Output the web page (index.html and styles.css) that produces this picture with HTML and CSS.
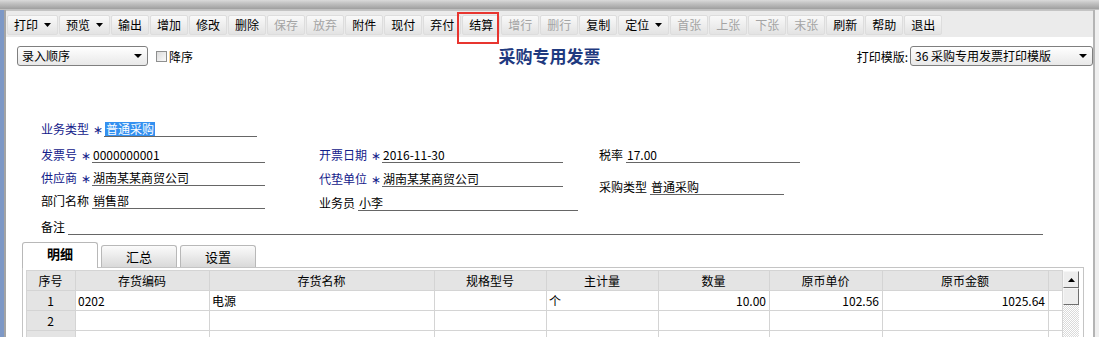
FILE: index.html
```html
<!DOCTYPE html>
<html lang="zh-CN">

<head>
    <meta charset="UTF-8">
    <title>采购专用发票</title>
    <link rel="stylesheet" href="styles.css">
</head>

<body>
    <div class="topbar"></div>
    <div class="window">
        <div class="sidebar"></div>
        <div class="main">
            <!-- 工具栏 -->
            <div class="toolbar">
                <span class="btn">打印<svg class="arrow" width="7" height="4" viewBox="0 0 7 4"><path d="M0 0h7L3.5 4z"/></svg></span>
                <span class="btn">预览<svg class="arrow" width="7" height="4" viewBox="0 0 7 4"><path d="M0 0h7L3.5 4z"/></svg></span>
                <span class="btn">输出</span>
                <span class="btn">增加</span>
                <span class="btn">修改</span>
                <span class="btn">删除</span>
                <span class="btn off">保存</span>
                <span class="btn off">放弃</span>
                <span class="btn">附件</span>
                <span class="btn">现付</span>
                <span class="btn">弃付</span>
                <span class="btn">结算<span class="mark"></span></span>
                <span class="btn off">增行</span>
                <span class="btn off">删行</span>
                <span class="btn">复制</span>
                <span class="btn">定位<svg class="arrow" width="7" height="4" viewBox="0 0 7 4"><path d="M0 0h7L3.5 4z"/></svg></span>
                <span class="btn off">首张</span>
                <span class="btn off">上张</span>
                <span class="btn off">下张</span>
                <span class="btn off">末张</span>
                <span class="btn">刷新</span>
                <span class="btn">帮助</span>
                <span class="btn">退出</span>
            </div>

            <!-- 标题行 -->
            <div class="headrow">
                <div class="head-left">
                    <div class="select sel-order">录入顺序<svg width="8" height="4" viewBox="0 0 8 4"><path d="M0 0h8L4 4z"/></svg></div>
                    <span class="check"></span>降序
                </div>
                <div class="title">采购专用发票</div>
                <div class="head-right">
                    打印模版:<div class="select sel-tpl">36 采购专用发票打印模版<svg width="8" height="4" viewBox="0 0 8 4"><path d="M0 0h8L4 4z"/></svg></div>
                </div>
            </div>

            <!-- 表头字段 -->
            <div class="form">
                <div class="field">
                    <span class="lbl req">业务类型</span><span class="star">∗</span><span class="val v-type"><span class="hl">普通采购</span></span>
                </div>
                <div class="cols">
                    <div class="col col1">
                        <div class="field">
                            <span class="lbl req">发票号</span><span class="star">∗</span><span class="val v-short">0000000001</span>
                        </div>
                        <div class="field">
                            <span class="lbl req">供应商</span><span class="star">∗</span><span class="val v-short">湖南某某商贸公司</span>
                        </div>
                        <div class="field">
                            <span class="lbl">部门名称</span><span class="val v-short">销售部</span>
                        </div>
                    </div>
                    <div class="col col2">
                        <div class="field">
                            <span class="lbl req">开票日期</span><span class="star">∗</span><span class="val v-mid">2016-11-30</span>
                        </div>
                        <div class="field">
                            <span class="lbl req">代垫单位</span><span class="star">∗</span><span class="val v-mid">湖南某某商贸公司</span>
                        </div>
                        <div class="field">
                            <span class="lbl">业务员</span><span class="val v-clerk">小李</span>
                        </div>
                    </div>
                    <div class="col col3">
                        <div class="field">
                            <span class="lbl">税率</span><span class="val v-tax">17.00</span>
                        </div>
                        <div class="field">
                            <span class="lbl">采购类型</span><span class="val v-ptype">普通采购</span>
                        </div>
                    </div>
                </div>
                <div class="field note">
                    <span class="lbl">备注</span><span class="val v-note"></span>
                </div>
            </div>

            <!-- 页签 -->
            <div class="tabs">
                <span class="tab active">明细</span>
                <span class="tab">汇总</span>
                <span class="tab">设置</span>
            </div>
            <div class="panel">
                <table class="grid">
                    <colgroup>
                        <col class="c-no">
                        <col class="c-code">
                        <col class="c-name">
                        <col class="c-spec">
                        <col class="c-unit">
                        <col class="c-qty">
                        <col class="c-price">
                        <col class="c-amount">
                        <col class="c-pad">
                    </colgroup>
                    <thead>
                        <tr>
                            <th>序号</th>
                            <th>存货编码</th>
                            <th>存货名称</th>
                            <th>规格型号</th>
                            <th>主计量</th>
                            <th>数量</th>
                            <th>原币单价</th>
                            <th>原币金额</th>
                            <th></th>
                        </tr>
                    </thead>
                    <tbody>
                        <tr>
                            <td class="no">1</td>
                            <td>0202</td>
                            <td>电源</td>
                            <td></td>
                            <td>个</td>
                            <td class="num">10.00</td>
                            <td class="num">102.56</td>
                            <td class="num">1025.64</td>
                            <td></td>
                        </tr>
                        <tr>
                            <td class="no">2</td>
                            <td></td><td></td><td></td><td></td><td></td><td></td><td></td><td></td>
                        </tr>
                        <tr>
                            <td class="no"></td>
                            <td></td><td></td><td></td><td></td><td></td><td></td><td></td><td></td>
                        </tr>
                    </tbody>
                </table>
                <div class="vscroll">
                    <span class="sb-btn"><svg width="7" height="4" viewBox="0 0 7 4"><path d="M0 4h7L3.5 0z"/></svg></span>
                    <span class="sb-btn"></span>
                    <span class="sb-track"></span>
                </div>
            </div>
        </div>
        <div class="edge"></div>
    </div>
</body>

</html>
```

FILE: styles.css
```css
/* 采购专用发票 */

body {
    margin: 0;
    height: 337px;
    overflow: hidden;
    font-family: "Noto Sans CJK SC", "Liberation Sans", sans-serif;
    font-size: 12px;
    color: #000;
    background: #f0f0f0;
}

.topbar {
    height: 10px;
    background: linear-gradient(#dadada, #c4c4c4 30%, #a2a2a2 85%, #cfcfcf);
}

.window {
    display: flex;
    height: 327px;
}

.sidebar {
    width: 4px;
    background: #7d98c6;
}

.main {
    flex: 1;
    min-width: 0;
    background: #fff;
    border-left: 2px solid #a4a4a4;
    border-right: 2px solid #b4b4b4;
}

.edge {
    width: 4px;
    background: #efefef;
}

/* 工具栏 */

.toolbar {
    display: flex;
    gap: 1px;
    height: 20px;
    padding: 4px 1px 2px;
    background: #ebebeb;
    border-top: 1px solid #c4c4c4;
}

.btn {
    position: relative;
    display: flex;
    align-items: center;
    box-sizing: border-box;
    height: 20px;
    padding: 0 6px;
    border: 1px solid #dddddd;
    border-radius: 2px;
    background: linear-gradient(#f9f9f9, #e3e3e3);
    line-height: 18px;
    white-space: nowrap;
}

.btn.off {
    color: #a4a4a4;
}

.arrow {
    margin-left: 6px;
}

.mark {
    position: absolute;
    left: -6px;
    top: -4px;
    width: 42px;
    height: 32px;
    box-sizing: border-box;
    border: 2px solid #e8352f;
    pointer-events: none;
}

/* 标题行 */

.headrow {
    display: grid;
    grid-template-columns: 1fr auto 1fr;
    align-items: center;
    height: 20px;
    margin-top: 9px;
}

.head-left {
    display: flex;
    align-items: center;
    margin-left: 11px;
}

.head-right {
    display: flex;
    align-items: center;
    justify-self: end;
}

.select {
    display: flex;
    align-items: center;
    justify-content: space-between;
    box-sizing: border-box;
    height: 20px;
    padding: 0 5px 0 4px;
    border: 1px solid #7f7f7f;
    border-radius: 3px;
    background: linear-gradient(#ffffff, #e8e8e8);
    line-height: 18px;
    white-space: nowrap;
}

.sel-order {
    width: 131px;
}

.sel-tpl {
    width: 183px;
    margin-left: 2px;
}

.check {
    width: 11px;
    height: 11px;
    box-sizing: border-box;
    margin: 0 2px 0 8px;
    border: 1px solid #8e8f8f;
    background: linear-gradient(135deg, #dcdcdc, #fafafa);
}

.title {
    font-size: 17px;
    font-weight: bold;
    line-height: 20px;
    color: #1f3a80;
}

/* 表头字段 */

.form {
    padding: 56px 50px 0 35px;
}

.field {
    display: flex;
    height: 15px;
    line-height: 14px;
    white-space: nowrap;
}

.lbl {
    margin-right: 3px;
}

.lbl.req,
.star {
    color: #13208a;
}

.star {
    width: 12px;
    text-align: center;
}

.val {
    box-sizing: border-box;
    height: 15px;
    padding-left: 1px;
    border-bottom: 1px solid #666;
}

.hl {
    display: inline-block;
    height: 14px;
    padding: 0 1px;
    background: #3390f0;
    color: #fff;
}

.v-type {
    width: 153px;
}

.v-short {
    width: 173px;
}

.v-mid {
    width: 181px;
}

.v-clerk {
    width: 220px;
}

.v-tax {
    width: 174px;
}

.v-ptype {
    width: 134px;
}

.v-note {
    flex: 1;
}

.cols {
    display: flex;
    margin-top: 11px;
}

.col {
    display: flex;
    flex-direction: column;
}

.col1 {
    width: 278px;
    gap: 8px;
}

.col2 {
    width: 280px;
    gap: 9px;
}

.col3 {
    gap: 17px;
}

.note {
    margin-top: 9px;
}

/* 页签 */

.tabs {
    display: flex;
    align-items: flex-end;
    gap: 3px;
    margin-top: 7px;
    padding-left: 16px;
}

.tab {
    position: relative;
    box-sizing: border-box;
    width: 76px;
    height: 22px;
    border: 1px solid #b8b8b8;
    border-bottom: none;
    border-radius: 3px 3px 0 0;
    background: linear-gradient(#fbfbfb, #d9d9d9);
    font-size: 13px;
    line-height: 22px;
    text-align: center;
}

.tab.active {
    z-index: 1;
    height: 26px;
    margin-bottom: -1px;
    background: #fff;
    font-weight: bold;
    line-height: 22px;
}

.panel {
    display: flex;
    align-items: flex-start;
    height: 80px;
    margin: 0 9px 0 16px;
    padding: 2px 4px 0 3px;
    border: 1px solid #c4c4c4;
    border-bottom: none;
}

/* 明细表格 */

.grid {
    width: 1036px;
    border-collapse: collapse;
    table-layout: fixed;
}

.grid th,
.grid td {
    height: 19px;
    padding: 0 3px 0 2px;
    border: 1px solid #d4d4d4;
    font-weight: normal;
    line-height: 18px;
    white-space: nowrap;
    overflow: hidden;
}

.grid th {
    background: #e4e4e4;
    text-align: center;
}

.grid td.no {
    background: #e4e4e4;
    text-align: center;
}

.grid td.num {
    text-align: right;
}

.c-no {
    width: 49px;
}

.c-code {
    width: 134px;
}

.c-name {
    width: 225px;
}

.c-spec,
.c-unit {
    width: 112px;
}

.c-qty {
    width: 111px;
}

.c-price {
    width: 113px;
}

.c-amount {
    width: 166px;
}

.c-pad {
    width: 14px;
}

.vscroll {
    display: flex;
    flex-direction: column;
    width: 17px;
    height: 78px;
    margin-top: 1px;
}

.sb-btn {
    display: flex;
    align-items: center;
    justify-content: center;
    box-sizing: border-box;
    height: 17px;
    border: 1px solid;
    border-color: #f6f6f6 #6e6e6e #6e6e6e #f6f6f6;
    background: #ededed;
}

.sb-track {
    flex: 1;
    background: repeating-conic-gradient(#dadada 0 25%, #fff 0 50%) 0 0 / 2px 2px;
}
```
